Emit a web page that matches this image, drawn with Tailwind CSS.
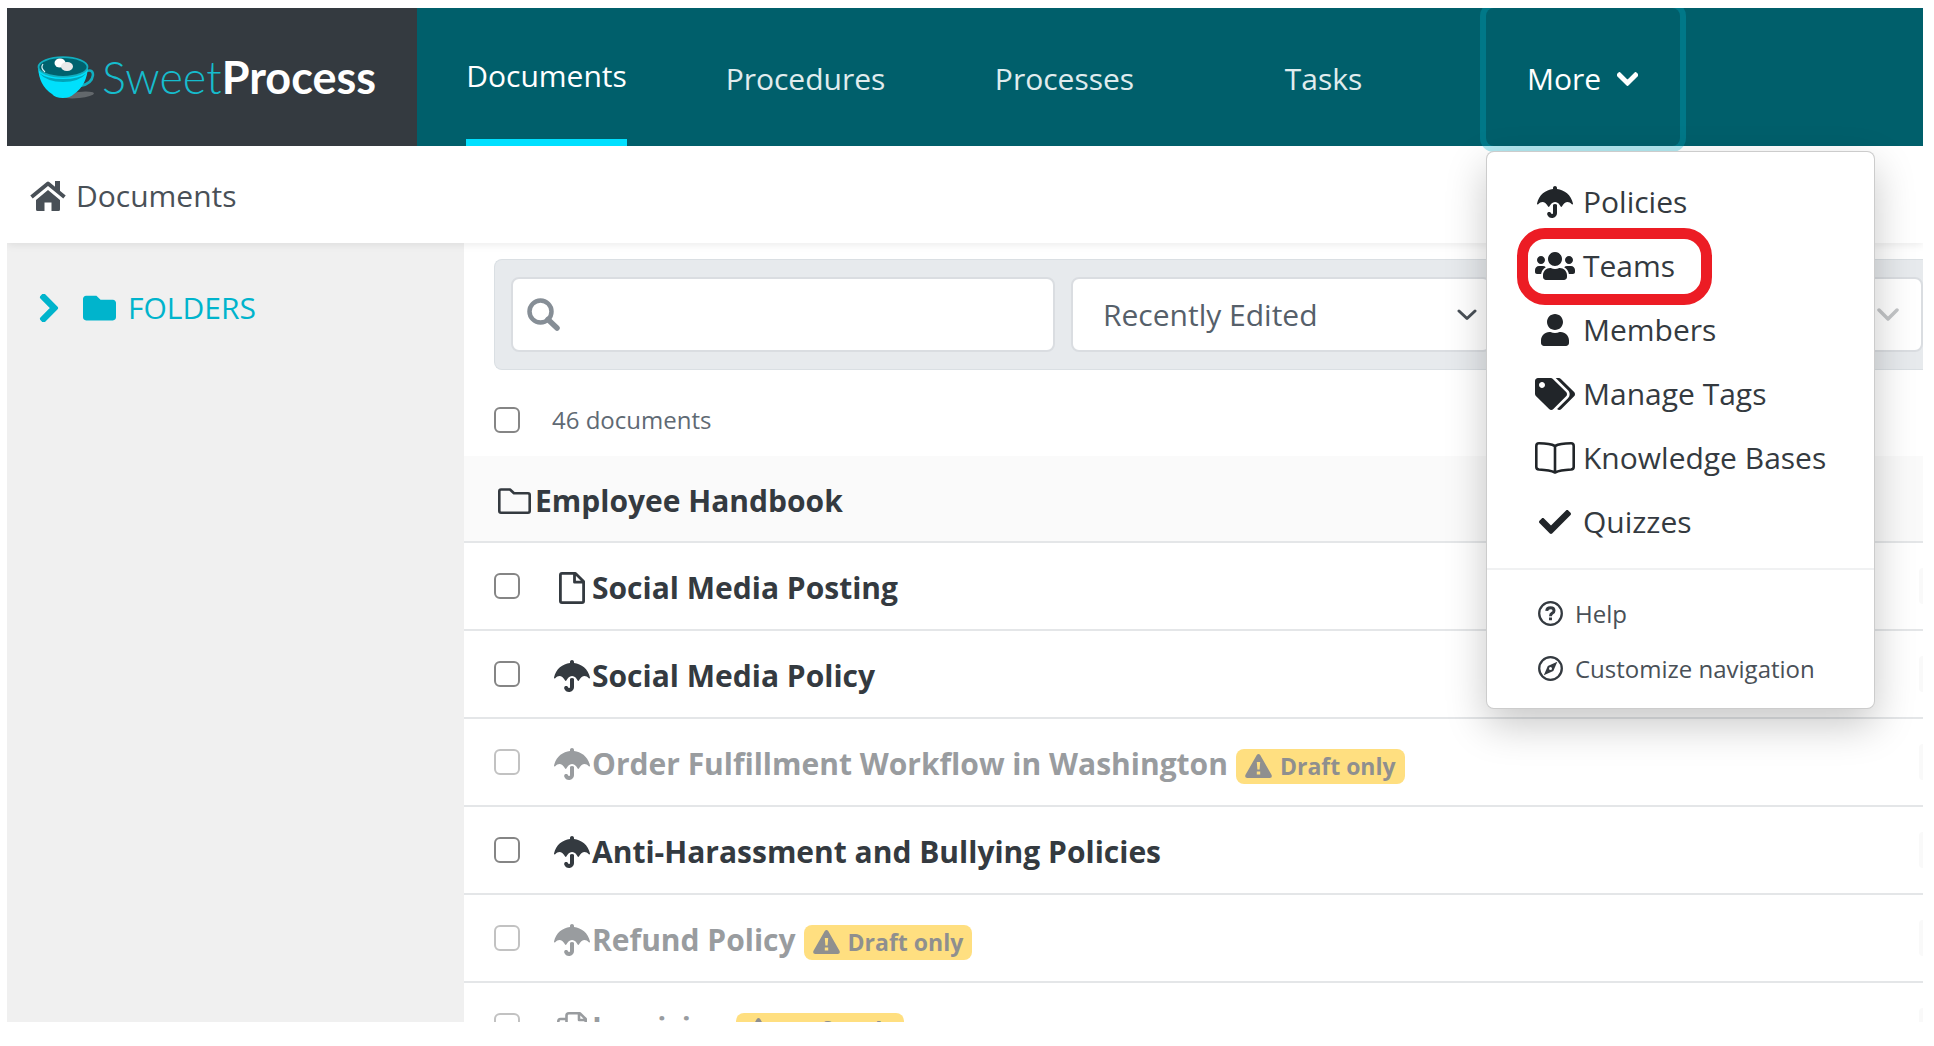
<!DOCTYPE html>
<html lang="en">
<head>
  <meta charset="UTF-8" />
  <meta name="viewport" content="width=device-width, initial-scale=1.0"/>
  <title>Documents - SweetProcess</title>
  <script src="https://cdn.jsdelivr.net/npm/@tailwindcss/browser@4"></script>
</head>
<body class="h-screen bg-white pt-2 pr-[11px] pb-6 pl-[7px] font-['Open_Sans',sans-serif] text-[30px] leading-10 text-[#343a40]">

  <!-- Icon sprite -->
  <svg class="hidden" xmlns="http://www.w3.org/2000/svg">
    <symbol id="umbrella" viewBox="0 0 576 512"><path fill="currentColor" d="M575.7 280.8C547.1 144.5 437.3 62.6 320 49.9V32c0-17.7-14.3-32-32-32s-32 14.3-32 32v17.9C138.3 62.6 29.5 144.5.3 280.8c-2.2 10.1 8.5 21.3 18.7 11.4 52-55 107.7-52.4 158.6 37 5.3 9.5 14.9 8.6 19.7 0 20.2-35.4 44.9-73.2 90.7-73.2 58.5 0 88.2 68.8 90.7 73.2 4.8 8.6 14.4 9.5 19.7 0 51-89.5 107.1-91.4 158.6-37 10.3 10 20.9-1.3 18.7-11.4zM256 301.7V432c0 8.8-7.2 16-16 16-7.8 0-13.2-5.3-15.1-10.7-5.9-16.7-24.1-25.4-40.8-19.5-16.7 5.9-25.4 24.2-19.5 40.8 11.2 31.9 41.6 53.3 75.4 53.3 44.1 0 80-35.9 80-80V301.6c-9.1-7.9-19.8-13.6-32-13.6-12.3.1-22.4 4.8-32 13.7z"/></symbol>
    <symbol id="users" viewBox="0 0 640 512"><path fill="currentColor" d="M96 224c35.3 0 64-28.7 64-64s-28.7-64-64-64-64 28.7-64 64 28.7 64 64 64zm448 0c35.3 0 64-28.7 64-64s-28.7-64-64-64-64 28.7-64 64 28.7 64 64 64zm32 32h-64c-17.6 0-33.5 7.1-45.1 18.6 40.3 22.1 68.9 62 75.1 109.4h66c17.7 0 32-14.3 32-32v-32c0-35.3-28.7-64-64-64zm-256 0c61.9 0 112-50.1 112-112S381.9 32 320 32 208 82.1 208 144s50.1 112 112 112zm76.8 32h-8.3c-20.8 10-43.9 16-68.5 16s-47.6-6-68.5-16h-8.3C179.6 288 128 339.6 128 403.2V432c0 26.5 21.5 48 48 48h288c26.5 0 48-21.5 48-48v-28.8c0-63.6-51.6-115.2-115.2-115.2zm-223.7-13.4C161.5 263.1 145.6 256 128 256H64c-35.3 0-64 28.7-64 64v32c0 17.7 14.3 32 32 32h65.9c6.3-47.4 34.9-87.3 75.2-109.4z"/></symbol>
    <symbol id="user" viewBox="0 0 448 512"><path fill="currentColor" d="M224 256c70.7 0 128-57.3 128-128S294.7 0 224 0 96 57.3 96 128s57.3 128 128 128zm89.6 32h-16.7c-22.2 10.2-46.9 16-72.9 16s-50.6-5.8-72.9-16h-16.7C60.2 288 0 348.2 0 422.4V464c0 26.5 21.5 48 48 48h352c26.5 0 48-21.5 48-48v-41.6c0-74.2-60.2-134.4-134.4-134.4z"/></symbol>
    <symbol id="tags" viewBox="0 0 640 512"><path fill="currentColor" d="M497.941 225.941L286.059 14.059A48 48 0 0 0 252.118 0H48C21.49 0 0 21.49 0 48v204.118a48 48 0 0 0 14.059 33.941l211.882 211.882c18.744 18.745 49.136 18.746 67.882 0l204.118-204.118c18.745-18.745 18.745-49.137 0-67.882zM112 160c-26.51 0-48-21.49-48-48s21.49-48 48-48 48 21.49 48 48-21.49 48-48 48zm513.941 133.823L421.823 497.941c-18.745 18.745-49.137 18.745-67.882 0l-.36-.36L527.64 323.522c16.999-16.999 26.362-39.6 26.362-63.64s-9.362-46.641-26.362-63.64L331.397 0h48.721a48 48 0 0 1 33.941 14.059l211.882 211.882c18.745 18.745 18.745 49.137 0 67.882z"/></symbol>
    <symbol id="book" viewBox="0 0 40 32"><path fill="none" stroke="currentColor" stroke-width="2.6" stroke-linejoin="round" d="M20 4C16 1.800 10 1.300 4 1.300Q1.300 1.300 1.300 4V25Q1.300 27.300 4 27.500C10 27.800 16 28.500 20 30.500C24 28.500 30 27.800 36 27.500Q38.700 27.300 38.700 25V4Q38.700 1.300 36 1.300C30 1.300 24 1.800 20 4ZM20 4V30.500"/></symbol>
    <symbol id="check" viewBox="0 0 512 512"><path fill="currentColor" d="M173.898 439.404l-166.4-166.4c-9.997-9.997-9.997-26.206 0-36.204l36.203-36.204c9.997-9.998 26.207-9.998 36.204 0L192 312.690 432.095 72.596c9.997-9.997 26.207-9.997 36.204 0l36.203 36.204c9.997 9.997 9.997 26.206 0 36.204l-294.400 294.401c-9.998 9.997-26.207 9.997-36.204-.001z"/></symbol>
    <symbol id="chevron" viewBox="0 0 448 512"><path fill="currentColor" stroke="currentColor" stroke-width="24" d="M207.029 381.476L12.686 187.132c-9.373-9.373-9.373-24.569 0-33.941l22.667-22.667c9.357-9.357 24.522-9.375 33.901-.04L224 284.505l154.745-154.021c9.379-9.335 24.544-9.317 33.901.04l22.667 22.667c9.373 9.373 9.373 24.569 0 33.941L240.971 381.476c-9.373 9.372-24.569 9.372-33.942 0z"/></symbol>
    <symbol id="folder" viewBox="0 64 512 384"><path fill="currentColor" d="M464 128H272l-64-64H48C21.490 64 0 85.490 0 112v288c0 26.510 21.490 48 48 48h416c26.510 0 48-21.490 48-48V176c0-26.510-21.490-48-48-48z"/></symbol>
    <symbol id="folder-o" viewBox="0 0 33 26"><path fill="none" stroke="currentColor" stroke-width="2.600" stroke-linejoin="round" d="M3 1.500H12L16 5.300H30Q31.700 5.300 31.700 7V23Q31.700 24.700 30 24.700H3Q1.300 24.700 1.300 23V3.300Q1.300 1.500 3 1.500Z"/></symbol>
    <symbol id="file-o" viewBox="0 0 26 32"><path fill="none" stroke="currentColor" stroke-width="2.800" stroke-linejoin="round" d="M3 1.400H16.500L24.600 9.500V29Q24.600 30.600 23 30.600H3Q1.400 30.600 1.400 29V3Q1.400 1.400 3 1.400ZM15.500 1.400V10.200H24.600"/></symbol>
    <symbol id="copy" viewBox="0 0 30 32"><path fill="none" stroke="currentColor" stroke-width="2.600" stroke-linejoin="round" d="M12 1.300H23L28.700 7V22.500H9.500V3.500Q9.500 1.300 12 1.300ZM22 1.300V8H28.700M9.500 7H3.500Q1.300 7 1.300 9.500V30.700H19V23"/></symbol>
    <symbol id="home" viewBox="0 0 36 30"><path fill="currentColor" d="M18 9L6 19V28.500Q6 30 7.500 30H14.500V21.500H21.500V30H28.500Q30 30 30 28.500V19Z"/><path fill="none" stroke="currentColor" stroke-width="3.800" stroke-linejoin="round" d="M1.500 16L18 2.500L34.500 16"/><path fill="currentColor" d="M25 0H30V11L25 7Z"/></symbol>
    <symbol id="search" viewBox="0 0 33 33"><path fill="none" stroke="currentColor" stroke-width="5.500" stroke-linecap="round" d="M21 21.500L30 30"/><circle cx="13.500" cy="13.500" r="11" fill="none" stroke="currentColor" stroke-width="4.500"/></symbol>
    <symbol id="warning" viewBox="0 0 27 24"><path fill="currentColor" fill-rule="evenodd" d="M11.800 1Q13.500-1 15.200 1L26.600 21Q27.500 24 24.700 24H2.300Q-.5 24 .4 21ZM11.800 8L12.400 15.500H14.600L15.200 8ZM11.800 17.500V20.500H15.200V17.500Z"/></symbol>
    <symbol id="help" viewBox="0 0 25 25"><circle cx="12.500" cy="12.500" r="11.300" fill="none" stroke="currentColor" stroke-width="2.300"/><path fill="none" stroke="currentColor" stroke-width="3" d="M8.700 9.800Q9 6.800 12.500 6.800Q16 6.800 16 9.700Q16 11.300 14.200 12.200Q12.500 13.100 12.500 15.200M12.500 16.500V19.300"/></symbol>
    <symbol id="compass" viewBox="0 0 25 25"><circle cx="12.500" cy="12.500" r="11.300" fill="none" stroke="currentColor" stroke-width="2.300"/><path fill="currentColor" fill-rule="evenodd" d="M19.300 5.800L15.300 15L5.800 19.300L9.800 10ZM12.500 11A1.500 1.500 0 1 0 12.500 14A1.500 1.500 0 1 0 12.500 11Z"/></symbol>
  </svg>

  <div class="flex h-full flex-col overflow-hidden">

    <header class="relative z-20 flex h-[138px] shrink-0 bg-[#005f6b]">
      <a href="#" class="flex w-[410px] shrink-0 items-center gap-1.5 bg-[#343a40] pl-[30px] font-['Lato',sans-serif] text-[45px] text-white">
        <svg class="h-[43px] w-[59px] shrink-0" viewBox="0 0 59 43">
          <ellipse cx="42" cy="39" rx="15" ry="3" fill="#63686c" transform="rotate(-6 42 39)"/>
          <path d="M47 16Q56 12 56 19Q55 28 43 30" fill="none" stroke="#12aebf" stroke-width="2.500"/>
          <path d="M1 11Q2 30 15 38Q18 42 26 42Q33 42 37 38Q50 29 51 11Z" fill="#00e0fc"/>
          <path d="M2 17Q10 26 26 26Q42 26 50 17Q42 23 26 23Q10 23 2 17Z" fill="#00a4b9"/>
          <ellipse cx="26" cy="11" rx="24.500" ry="9.800" fill="#00626e" stroke="#12aebf" stroke-width="1.800"/>
          <path d="M6 8Q3 12 8 16" fill="none" stroke="#d5f4f7" stroke-width="1.200"/>
          <ellipse cx="23" cy="7" rx="5.500" ry="4.500" fill="#fff"/>
          <ellipse cx="30" cy="10.500" rx="6" ry="4.500" fill="#e9e9e9"/>
        </svg>
        <span><span class="font-light text-[#16bccd]">Sweet</span><span class="font-bold">Process</span></span>
      </a>
      <nav class="flex text-white">
        <div class="flex w-[259px] justify-center"><a href="#" class="flex items-center border-b-[7px] border-[#00e0ff] pt-1">Documents</a></div>
        <div class="flex w-[259px] justify-center"><a href="#" class="flex items-center pt-1 text-[#e0ecee]">Procedures</a></div>
        <div class="flex w-[259px] justify-center"><a href="#" class="flex items-center pt-1 text-[#e0ecee]">Processes</a></div>
        <div class="flex w-[259px] justify-center"><a href="#" class="flex items-center pt-1 text-[#e0ecee]">Tasks</a></div>
        <div class="relative flex w-[259px] justify-center">
          <button class="flex w-[194px] items-center justify-center gap-4 rounded-lg pt-1 ring-6 ring-[#00b4cc]/30">More
            <svg class="h-6 w-[21px]"><use href="#chevron"/></svg>
          </button>
          <div class="absolute top-[143px] left-[33px] w-[389px] rounded-lg border border-black/20 bg-white pt-[18px] pb-3 text-[#343a40] shadow-[0_16px_40px_rgba(0,0,0,0.22)]">
            <ul id="moreMenu"></ul>
            <ul class="mt-[14px] border-t-2 border-[#f0f1f2] pt-4 text-2xl text-[#495057]">
              <li><a href="#" class="flex h-[55px] items-center gap-3 pl-[51px]"><svg class="size-[25px] text-[#343a40]"><use href="#help"/></svg>Help</a></li>
              <li><a href="#" class="flex h-[55px] items-center gap-3 pl-[51px]"><svg class="size-[25px] text-[#343a40]"><use href="#compass"/></svg>Customize navigation</a></li>
            </ul>
          </div>
        </div>
      </nav>
    </header>

    <div class="relative z-10 flex h-[97px] shrink-0 items-center gap-2.5 bg-white pt-0.5 pl-[23px] text-[#495057] shadow-[0_2px_8px_rgba(0,0,0,0.08)]">
      <svg class="h-[30px] w-9"><use href="#home"/></svg>
      <a href="#">Documents</a>
    </div>

    <div class="flex min-h-0 flex-1">
      <aside class="w-[457px] shrink-0 bg-[#f0f0f0] pt-[45px] pl-7">
        <button class="flex items-center text-[#00b4cc]">
          <svg class="h-8 w-7 -rotate-90"><use href="#chevron"/></svg>
          <svg class="ml-5 h-[26px] w-[33px]"><use href="#folder"/></svg>
          <span class="ml-3">FOLDERS</span>
        </button>
      </aside>

      <main class="min-w-0 flex-1 overflow-hidden pt-4">
        <div class="ml-[30px] flex h-[111px] items-center gap-4 rounded-l-lg border border-r-0 border-[#dadfe3] bg-[#e7eaed] pl-4">
          <label class="flex h-[75px] w-[544px] items-center rounded-lg border-2 border-[#dadde1] bg-white pl-[14px] text-[#868e96]">
            <svg class="h-[33px] w-[33px] shrink-0"><use href="#search"/></svg>
            <input type="search" aria-label="Search documents" class="ml-3 w-full min-w-0 outline-none" />
          </label>
          <div class="relative flex items-center">
            <select aria-label="Sort order" class="h-[75px] w-[420px] appearance-none rounded-lg border-2 border-[#dadde1] bg-white pl-[30px] text-[#56606a]">
              <option>Recently Edited</option>
            </select>
            <svg class="absolute right-[14px] h-3 w-5" viewBox="0 0 20 12"><path d="M2 2L10 9.500L18 2" fill="none" stroke="#495057" stroke-width="3" stroke-linecap="round" stroke-linejoin="round"/></svg>
          </div>
          <div class="relative flex min-w-0 flex-1 items-center">
            <select aria-label="Filter" class="h-[75px] w-full appearance-none rounded-lg border-2 border-[#dadde1] bg-white">
              <option></option>
            </select>
            <svg class="absolute right-6 h-[14px] w-[22px]" viewBox="0 0 22 14"><path d="M2 2L11 11L20 2" fill="none" stroke="#c4c6c8" stroke-width="3.500" stroke-linecap="round" stroke-linejoin="round"/></svg>
          </div>
        </div>

        <label class="flex h-[86px] items-center gap-8 pt-[14px] pl-[30px] text-2xl text-[#5f6a74]">
          <input type="checkbox" class="size-[26px] shrink-0 appearance-none rounded-md border-2 border-[#858585] bg-white" />
          46 documents
        </label>
        <h2 class="flex h-[87px] items-center gap-1 border-b-2 border-[#e4e6e8] bg-[#fafafa] pt-1 pl-[34px] font-bold">
          <svg class="h-[26px] w-[33px]"><use href="#folder-o"/></svg>Employee Handbook
        </h2>
        <ul id="documentList"></ul>
      </main>
    </div>
  </div>

  <script>
    const menuItems = [
      { icon: "umbrella", label: "Policies", size: "h-8 w-9" },
      { icon: "users", label: "Teams", size: "h-8 w-10", marked: true },
      { icon: "user", label: "Members", size: "h-8 w-7" },
      { icon: "tags", label: "Manage Tags", size: "h-8 w-10" },
      { icon: "book", label: "Knowledge Bases", size: "h-8 w-10" },
      { icon: "check", label: "Quizzes", size: "h-8 w-8" }
    ];

    const documents = [
      { icon: "file-o", title: "Social Media Posting" },
      { icon: "umbrella", title: "Social Media Policy" },
      { icon: "umbrella", title: "Order Fulfillment Workflow in Washington", draft: true },
      { icon: "umbrella", title: "Anti-Harassment and Bullying Policies" },
      { icon: "umbrella", title: "Refund Policy", draft: true },
      { icon: "copy", title: "Invoicing", draft: true }
    ];

    const iconSizes = {
      "file-o": "h-8 w-[26px]",
      "umbrella": "h-8 w-9",
      "copy": "h-8 w-[30px]"
    };

    document.getElementById("moreMenu").innerHTML = menuItems.map(item => `
      <li class="relative">
        <a href="#" class="flex h-16 items-center gap-2 pl-12">
          <span class="flex w-10 justify-center text-[#212529]"><svg class="${item.size}"><use href="#${item.icon}"/></svg></span>
          ${item.label}
        </a>
        ${item.marked ? '<span class="absolute -top-1.5 left-[30px] h-[77px] w-[195px] rounded-[28px] border-[11px] border-[#ec1c24]"></span>' : ''}
      </li>
    `).join('');

    document.getElementById("documentList").innerHTML = documents.map((doc, i) => `
      <li class="flex h-[88px] items-center border-b-2 border-[#e4e6e8] pl-[30px]">
        <input type="checkbox" id="doc${i}" class="size-[26px] shrink-0 appearance-none rounded-md border-2 bg-white ${doc.draft ? 'border-[#c2c2c2]' : 'border-[#858585]'}" />
        <label for="doc${i}" class="ml-8 flex items-center pt-1 font-bold ${doc.draft ? 'text-[#999c9f]' : ''}">
          <span class="flex w-10 justify-center"><svg class="${iconSizes[doc.icon]}"><use href="#${doc.icon}"/></svg></span>
          <span>${doc.title}</span>
          ${doc.draft ? '<span class="ml-2 mt-1 flex h-[35px] items-center gap-2 rounded-lg bg-[#ffdf80] px-[9px] text-[23px] text-[#8f8f8f]"><svg class="h-6 w-[27px]"><use href="#warning"/></svg>Draft only</span>' : ''}
        </label>
        <span class="ml-auto h-9 w-1 rounded-l bg-[#f9f9f9]"></span>
      </li>
    `).join('');
  </script>
</body>
</html>
